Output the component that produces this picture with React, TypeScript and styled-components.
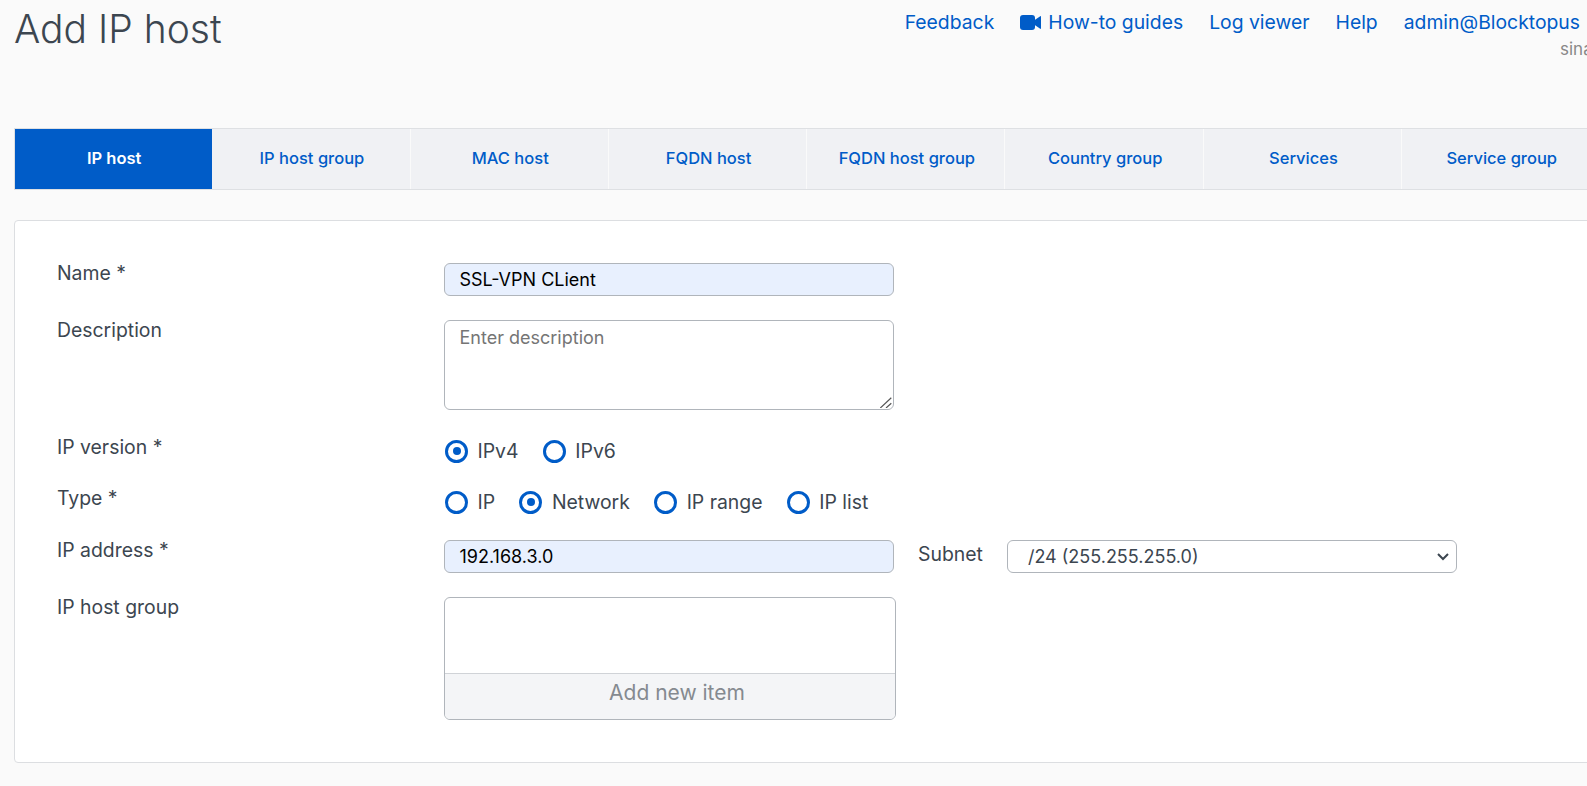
import React from 'react';
import styled, { createGlobalStyle } from 'styled-components';

const Global = createGlobalStyle`
  html, body { margin: 0; padding: 0; background: #fafafa; overflow: hidden; }
  body { font-family: Inter, "Liberation Sans", sans-serif; color: #3c4650; }
  * { box-sizing: border-box; }
`;
const Page = styled.div`
  width: 1587px; height: 786px; overflow: hidden; padding: 0 0 0 14px;
`;
const Header = styled.header`
  display: flex; justify-content: space-between; height: 128px; width: 1590px;
`;
const Title = styled.h1`
  margin: 5px 0 0; font-size: 39px; line-height: 48px; font-weight: 300; color: #3c4650;
`;
const TopRight = styled.div`
  display: flex; flex-direction: column; align-items: flex-end; padding-top: 10px;
`;
const TopNav = styled.nav`
  display: flex; gap: 26px; font-size: 19.35px; line-height: 24px; color: #005cc8; padding-right: 24px;
`;
const TopLink = styled.a`
  display: flex; align-items: center; gap: 7px;
`;
const Tenant = styled.div`
  font-size: 17px; line-height: 20px; color: #888; width: 44px; margin-top: 5px; white-space: nowrap;
`;
const Tabs = styled.div`
  display: flex; width: 1590px; height: 62px; background: #f0f1f4; border: 1px solid #dee0e3;
`;
const Tab = styled.div<{ $active?: boolean }>`
  width: ${p => (p.$active ? 197.3 : 198.3)}px; flex: none; display: flex; align-items: center; justify-content: center; padding: 0 0 3px 2px;
  font-size: 16.5px; font-weight: ${p => (p.$active ? 600 : 500)}; color: ${p => (p.$active ? '#fff' : '#005cc8')};
  background: ${p => (p.$active ? '#005cc8' : 'transparent')};
  border-right: 1px solid ${p => (p.$active ? '#005cc8' : '#fafafa')};
`;
const Card = styled.section`
  margin-top: 30px; width: 1590px; height: 543px; background: #fff; border: 1px solid #dcdee1; border-radius: 4px;
  padding: 42px 0 0 42px;
`;
const Row = styled.div<{ $h: number }>`
  display: grid; grid-template-columns: 387px 1fr; height: ${p => p.$h}px; align-items: start;
`;
const Label = styled.label`
  font-size: 19.4px; line-height: 20px; color: #3c4650;
`;
const Control = styled.div`
  display: flex; align-items: flex-start;
`;
const Input = styled.div`
  width: 450px; height: 33px; border: 1px solid #b0b5bb; border-radius: 6px; background: #e8f0fe;
  font-size: 18px; line-height: 31px; padding-left: 14.5px; color: #000;
`;
const TextArea = styled.div`
  position: relative; width: 450px; height: 90px; border: 1px solid #b0b5bb; border-radius: 6px; background: #fff;
  font-size: 18px; line-height: 24px; padding: 5px 14.5px; color: #757575;
`;
const Grip = styled.svg`
  position: absolute; right: 1px; bottom: 1px;
`;
const Radios = styled.div`
  display: flex; align-items: center; height: 24px; gap: 24.3px; margin-top: 2px; margin-left: 1px;
`;
const RadioItem = styled.span`
  display: flex; align-items: center; gap: 9.5px; font-size: 19.4px; color: #3c4650;
`;
const RadioMark = styled.span<{ $on?: boolean }>`
  width: 23px; height: 23px; border-radius: 50%; border: 3.5px solid #005cc8; background: #fff; display: flex; align-items: center; justify-content: center;
  &::after { content: ''; width: 8px; height: 8px; border-radius: 50%; background: ${p => (p.$on ? '#005cc8' : 'transparent')}; }
`;
const SubnetLabel = styled.span`
  font-size: 19.4px; line-height: 28px; margin: 0 24px; color: #3c4650;
`;
const Select = styled.div`
  width: 450px; height: 33px; border: 1px solid #b0b5bb; border-radius: 6px; background: #fff; display: flex; align-items: center; justify-content: space-between;
  font-size: 18px; padding: 0 6px 0 20px; color: #3c4650;
`;
const ListBox = styled.div`
  width: 452px; height: 123px; border: 1px solid #b0b5bb; border-radius: 6px; background: #fff; display: flex; flex-direction: column; overflow: hidden;
`;
const ListBody = styled.div`
  flex: 1;
`;
const AddItem = styled.div`
  height: 46px; background: #f4f5f7; border-top: 1px solid #d0d3d7; text-align: center; font-size: 21px; line-height: 38px; color: #858a90; padding-left: 14px;
`;
const tabs = ['IP host','IP host group','MAC host','FQDN host','FQDN host group','Country group','Services','Service group'];
const Radio = ({ on, children }: { on?: boolean; children: React.ReactNode }) => (
  <RadioItem><RadioMark $on={on} />{children}</RadioItem>
);
export default function App() {
  return (
    <Page>
      <Global />
      <Header>
        <Title>Add IP host</Title>
        <TopRight>
          <TopNav>
            <TopLink>Feedback</TopLink>
            <TopLink>
              <svg width="21" height="15" viewBox="0 0 21 15"><rect x="0" y="0" width="15" height="15" rx="3" fill="#005cc8"/><path d="M14 5.5 20.2 1.2c.4-.2.8 0 .8.5v11.6c0 .5-.4.7-.8.5L14 9.5z" fill="#005cc8"/></svg>
              How-to guides
            </TopLink>
            <TopLink>Log viewer</TopLink>
            <TopLink>Help</TopLink>
            <TopLink>admin@Blocktopus</TopLink>
          </TopNav>
          <Tenant>sina</Tenant>
        </TopRight>
      </Header>
      <Tabs>
        {tabs.map((t, i) => <Tab key={t} $active={i === 0}>{t}</Tab>)}
      </Tabs>
      <Card>
        <Row $h={57}><Label>Name *</Label><Control><Input>SSL-VPN CLient</Input></Control></Row>
        <Row $h={117}><Label>Description</Label><Control><TextArea>Enter description
          <Grip width="12" height="12" viewBox="0 0 12 12"><path d="M.3 12 11.3 1.7M6 12l5.3-4.7" stroke="#555" strokeWidth="1.2"/></Grip></TextArea></Control></Row>
        <Row $h={51}><Label>IP version *</Label><Control><Radios><Radio on>IPv4</Radio><Radio>IPv6</Radio></Radios></Control></Row>
        <Row $h={52}><Label>Type *</Label><Control><Radios><Radio>IP</Radio><Radio on>Network</Radio><Radio>IP range</Radio><Radio>IP list</Radio></Radios></Control></Row>
        <Row $h={57}><Label>IP address *</Label><Control><Input>192.168.3.0</Input><SubnetLabel>Subnet</SubnetLabel><Select>/24 (255.255.255.0)<svg width="14" height="9" viewBox="0 0 14 9"><path d="M2 2 7 7l5-5" fill="none" stroke="#3c4650" strokeWidth="2"/></svg></Select></Control></Row>
        <Row $h={130}><Label>IP host group</Label><Control><ListBox><ListBody /><AddItem>Add new item</AddItem></ListBox></Control></Row>
      </Card>
    </Page>
  );
}
